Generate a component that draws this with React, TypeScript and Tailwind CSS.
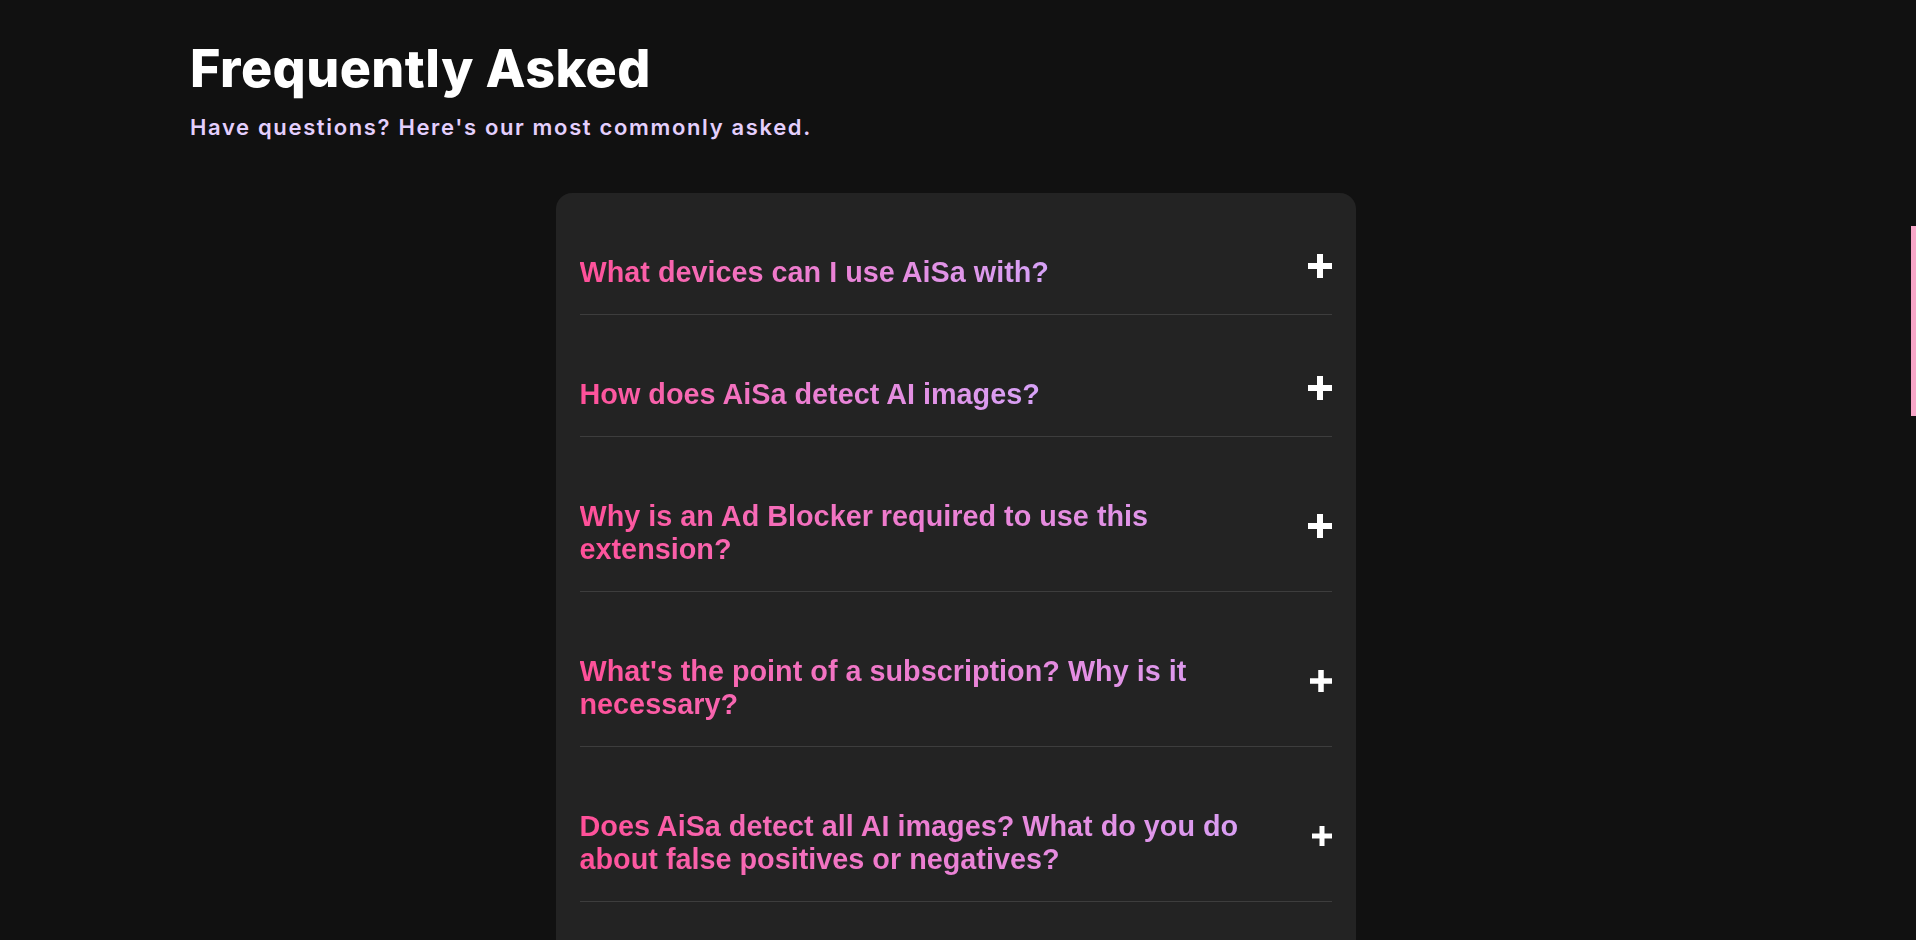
import React from "react";

const faqs: { q: string; icon: number }[] = [
  { q: "What devices can I use AiSa with?", icon: 24 },
  { q: "How does AiSa detect AI images?", icon: 24 },
  { q: "Why is an Ad Blocker required to use this extension?", icon: 24 },
  { q: "What's the point of a subscription? Why is it necessary?", icon: 22 },
  { q: "Does AiSa detect all AI images? What do you do about false positives or negatives?", icon: 20 },
];

function Plus({ size }: { size: number }) {
  const bar = size / 4;
  const off = (size - bar) / 2;
  return (
    <svg width={size} height={size} viewBox={`0 0 ${size} ${size}`} className="shrink-0 -translate-y-[7px]">
      <rect x={off} y={0} width={bar} height={size} fill="#ffffff" />
      <rect x={0} y={off} width={size} height={bar} fill="#ffffff" />
    </svg>
  );
}

export default function App() {
  return (
    <div className="flex h-[940px] w-full overflow-hidden bg-[#111111]">
      <div className="flex-1 flex flex-col">
        <div className="px-[190px] pt-[43px]">
          <h1 className="font-['Inter',sans-serif] font-extrabold text-[52px] leading-[52px] text-white tracking-[0.45px]">
            Frequently Asked
          </h1>
          <p className="mt-[18px] font-['Inter',sans-serif] font-semibold text-[22px] leading-[28px] tracking-[1.65px] text-[#e4cffd]">
            Have questions? Here's our most commonly asked.
          </p>
        </div>
        <div className="mt-[52px] mx-auto w-[800px] rounded-2xl bg-[#232323] px-6 pb-16">
          {faqs.map((f) => (
            <div
              key={f.q}
              className="flex items-center justify-between gap-6 pt-[63px] pb-[25px] border-b border-[#3d3d3d]"
            >
              <div className="max-w-[700px] font-['Liberation_Sans',Arial,sans-serif] font-bold text-[28.8px] leading-[33px] bg-gradient-to-r from-[#ff4f98] via-[#ec7fd3] to-[#d6a2f7] bg-clip-text text-transparent">
                {f.q}
              </div>
              <Plus size={f.icon} />
            </div>
          ))}
        </div>
      </div>
      <div className="w-[5px] shrink-0">
        <div className="mt-[226px] h-[190px] w-[5px] bg-[#f7a6c8]" />
      </div>
    </div>
  );
}
